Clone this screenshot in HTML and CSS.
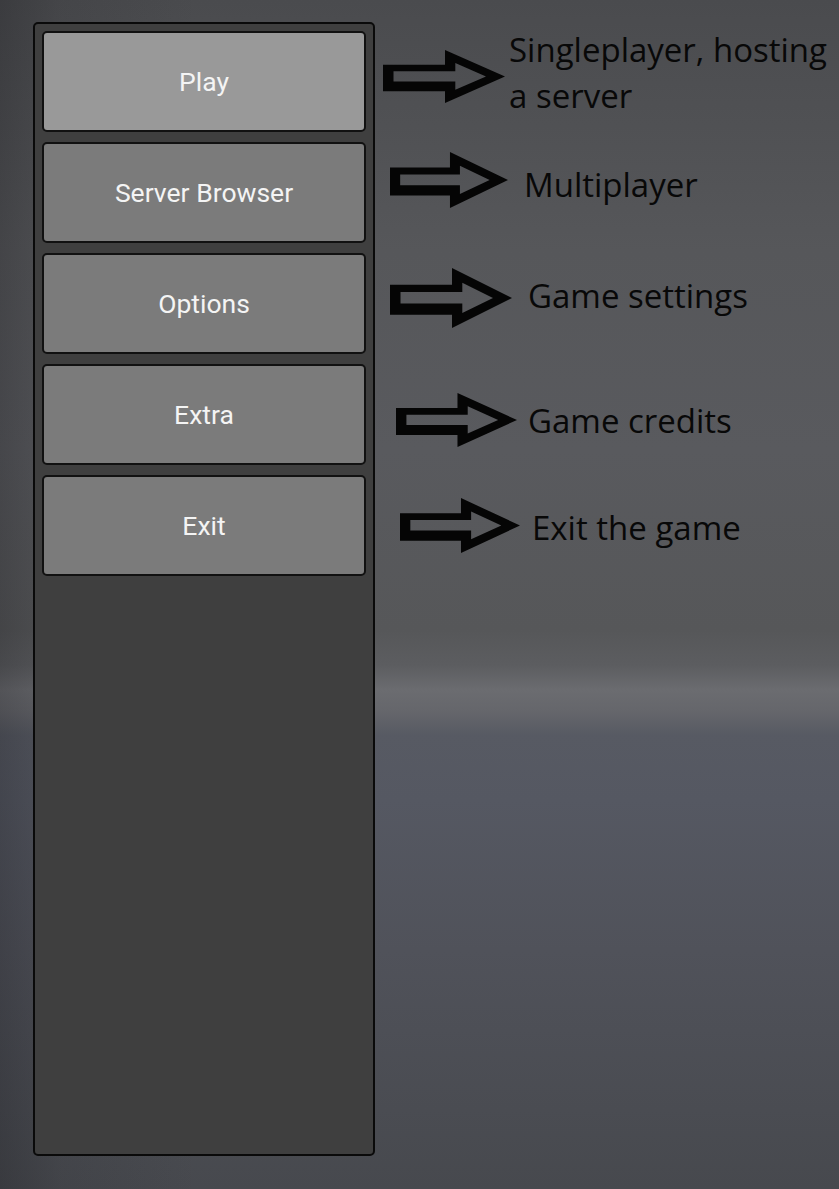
FILE: index.html
```html
<!DOCTYPE html>
<html lang="en">
<head>
<meta charset="utf-8">
<title>Main menu</title>
<link rel="stylesheet" href="styles.css">
</head>
<body>
<div class="stage">
  <nav class="menu">
    <button class="menu-btn is-hover">Play</button>
    <button class="menu-btn">Server Browser</button>
    <button class="menu-btn">Options</button>
    <button class="menu-btn">Extra</button>
    <button class="menu-btn">Exit</button>
  </nav>

  <svg class="arrow arrow-1" viewBox="0 0 122 54" preserveAspectRatio="none"><path fill-rule="evenodd" d="M0 15H62V0L122 27L62 54V42H0Z M10.5 21.7H72.3V13.3L103 27L72.3 40.5V32H10.5Z"/></svg>
  <svg class="arrow arrow-2" viewBox="0 0 122 54" preserveAspectRatio="none"><path fill-rule="evenodd" d="M0 15H62V0L122 27L62 54V42H0Z M10.5 21.7H72.3V13.3L103 27L72.3 40.5V32H10.5Z"/></svg>
  <svg class="arrow arrow-3" viewBox="0 0 122 54" preserveAspectRatio="none"><path fill-rule="evenodd" d="M0 15H62V0L122 27L62 54V42H0Z M10.5 21.7H72.3V13.3L103 27L72.3 40.5V32H10.5Z"/></svg>
  <svg class="arrow arrow-4" viewBox="0 0 122 54" preserveAspectRatio="none"><path fill-rule="evenodd" d="M0 15H62V0L122 27L62 54V42H0Z M10.5 21.7H72.3V13.3L103 27L72.3 40.5V32H10.5Z"/></svg>
  <svg class="arrow arrow-5" viewBox="0 0 122 54" preserveAspectRatio="none"><path fill-rule="evenodd" d="M0 15H62V0L122 27L62 54V42H0Z M10.5 21.7H72.3V13.3L103 27L72.3 40.5V32H10.5Z"/></svg>

  <p class="note note-1">Singleplayer, hosting<br>a server</p>
  <p class="note note-2">Multiplayer</p>
  <p class="note note-3">Game settings</p>
  <p class="note note-4">Game credits</p>
  <p class="note note-5">Exit the game</p>
</div>
</body>
</html>
```
FILE: styles.css
```css
html, body {
  margin: 0;
  padding: 0;
}
body {
  width: 839px;
  height: 1189px;
  overflow: hidden;
  background: #4a4b4e;
}
.stage {
  position: relative;
  width: 839px;
  height: 1189px;
  padding: 22px 0 0 33px;
  box-sizing: border-box;
  background:
    linear-gradient(to right, rgba(20,20,24,0.28) 0px, rgba(20,20,24,0.10) 60px, rgba(0,0,0,0) 200px),
    linear-gradient(to bottom,
      #4a4b4e 0px,
      #56575a 250px,
      #595a5e 450px,
      #565759 630px,
      #5c5d60 665px,
      #6b6c70 690px,
      #65666b 712px,
      #575a63 735px,
      #555862 800px,
      #50525a 950px,
      #47494e 1189px);
}
.menu {
  width: 342px;
  height: 1134px;
  box-sizing: border-box;
  border: 2px solid #0a0a0a;
  border-radius: 5px;
  background: #3f3f3f;
  padding: 7px;
  display: flex;
  flex-direction: column;
  gap: 10px;
}
.menu-btn {
  height: 101px;
  width: 100%;
  box-sizing: border-box;
  border: 2px solid #111;
  border-radius: 5px;
  background: #7b7b7b;
  color: #f4f4f4;
  font-family: Roboto, "Liberation Sans", sans-serif;
  font-size: 26.5px;
  padding: 0;
  margin: 0;
  display: flex;
  align-items: center;
  justify-content: center;
}
.menu-btn.is-hover {
  background: #999999;
}
.arrow {
  position: absolute;
  display: block;
  fill: #050505;
}
.arrow-1 { left: 383px; top: 50px; width: 122px; height: 53px; }
.arrow-2 { left: 390px; top: 152px; width: 118px; height: 56px; }
.arrow-3 { left: 390px; top: 268px; width: 122px; height: 60px; }
.arrow-4 { left: 396px; top: 393px; width: 121px; height: 54px; }
.arrow-5 { left: 400px; top: 498px; width: 120px; height: 55px; }

.note {
  position: absolute;
  margin: 0;
  font-family: "Open Sans", "Noto Sans", sans-serif;
  font-size: 33px;
  line-height: 46px;
  color: #080808;
  white-space: nowrap;
}
.note-1 { left: 509px; top: 27px; }
.note-2 { left: 524px; top: 162px; }
.note-3 { left: 528px; top: 273px; }
.note-4 { left: 528px; top: 398px; }
.note-5 { left: 532px; top: 505px; }
```
